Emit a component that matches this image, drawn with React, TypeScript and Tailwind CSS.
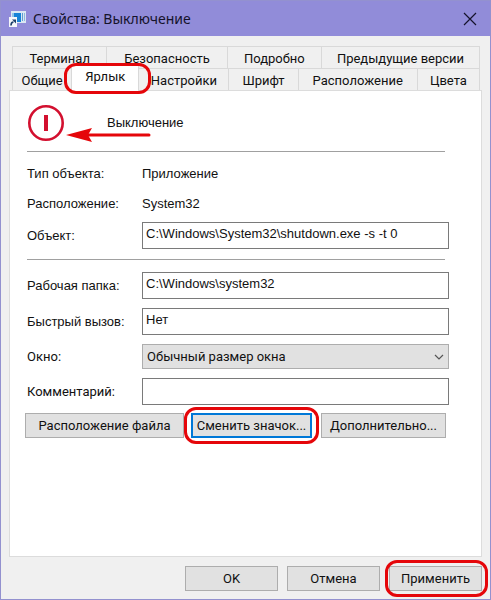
import React from 'react';
import { clsx } from 'clsx';

const topTabs = [
  { name: 'Терминал', width: 'grow-[94]' },
  { name: 'Безопасность', width: 'grow-[120]' },
  { name: 'Подробно', width: 'grow-[94]' },
  { name: 'Предыдущие версии', width: 'grow-[158]' },
];

const bottomTabs = [
  { name: 'Общие', width: 'grow-[59]' },
  { name: 'Ярлык', width: 'grow-[67]', active: true },
  { name: 'Настройки', width: 'grow-[90]' },
  { name: 'Шрифт', width: 'grow-[69]' },
  { name: 'Расположение', width: 'grow-[119]' },
  { name: 'Цвета', width: 'grow-[62]' },
];

const labelClass = 'w-[115px] shrink-0';
const inputClass =
  'h-[27px] min-w-0 flex-1 border border-[#7a7a7a] bg-white px-[3px] pb-1 text-[13px] text-[#111] outline-none';
const buttonClass = 'h-[25px] bg-[#e1e1e1] text-center whitespace-nowrap';
const grayBorder = 'border border-[#adadad]';

// Red frame drawn around the control that the reader has to click
function Highlight({ className }: { className: string }) {
  return (
    <span
      className={clsx(
        'pointer-events-none absolute z-20 rounded-xl border-3 border-[#e5060a]',
        className
      )}
    />
  );
}

function AppIcon() {
  return (
    <svg width="18" height="17" viewBox="0 0 18 17" aria-hidden="true">
      <rect x="2" y="1" width="15" height="12" fill="#dbe8f3" />
      <rect x="5" y="3" width="7" height="9" fill="#1683d8" />
      <rect x="3" y="3" width="2" height="9" fill="#8fc3ea" />
      <rect x="13" y="3" width="1" height="8" fill="#5d9fd2" />
      <rect x="15" y="3" width="1" height="8" fill="#8db9dc" />
      <rect x="0" y="7" width="8" height="10" fill="#f4f6fa" />
      <path d="M2 15.500c0-2.500 1-3.500 2.500-3.500" stroke="#1b3f6a" strokeWidth="1.600" fill="none" />
      <path d="M3 9.500h4v4z" fill="#1b3f6a" />
    </svg>
  );
}

function PowerIcon() {
  return (
    <svg width="38" height="38" viewBox="0 0 38 38" aria-hidden="true">
      <circle cx="19" cy="19" r="16.700" fill="none" stroke="#d3102f" strokeWidth="2.600" />
      <rect x="17" y="11" width="4" height="16" fill="#d3102f" />
    </svg>
  );
}

function Arrow() {
  return (
    <svg width="86" height="24" viewBox="0 0 86 24" aria-hidden="true">
      <path d="M22 12h62" stroke="#e5060a" strokeWidth="3" strokeLinecap="round" />
      <path d="M1 12L27 5l-4 7 4 7z" fill="#e5060a" />
    </svg>
  );
}

export default function App() {
  return (
    <div className="flex min-h-screen flex-col border border-[#9391cf] bg-[#f0f0f0] font-['Liberation_Sans',sans-serif] text-[13px] leading-5 text-[#111]">
      {/* Title bar */}
      <header className="flex h-[35px] shrink-0 items-center bg-[#918cd9] pr-3 pl-2">
        <AppIcon />
        <h1 className="ml-1.5 flex-1 font-['Noto_Sans',sans-serif] text-sm text-[#15132b]">
          Свойства: Выключение
        </h1>
        <button type="button" aria-label="Закрыть" className="flex size-4 items-center justify-center">
          <svg width="14" height="14" viewBox="0 0 14 14">
            <path d="M1 1l12 12M13 1L1 13" stroke="#15132b" strokeWidth="1.200" />
          </svg>
        </button>
      </header>

      <main className="flex flex-1 flex-col px-2 pt-2.5">
        {/* Tabs */}
        <div role="tablist" className="mr-0.5 ml-[3px] font-['Roboto',sans-serif]">
          <div className="flex h-[22px] border-t border-l border-[#d9d9d9]">
            {topTabs.map((tab) => (
              <button
                key={tab.name}
                type="button"
                role="tab"
                aria-selected="false"
                className={clsx('basis-0 border-r border-[#d9d9d9] pt-0.5 whitespace-nowrap', tab.width)}
              >
                {tab.name}
              </button>
            ))}
          </div>
          <div className="flex h-[22px] border-l border-[#d9d9d9]">
            {bottomTabs.map((tab) => (
              <div key={tab.name} className={clsx('relative flex basis-0', tab.width)}>
                <button
                  type="button"
                  role="tab"
                  aria-selected={!!tab.active}
                  className={clsx(
                    'flex-1 border-r border-[#d9d9d9] whitespace-nowrap',
                    tab.active ? 'z-10 -mt-1 -mb-px bg-white pb-0.5' : 'border-t pt-0.5'
                  )}
                >
                  {tab.name}
                </button>
                {tab.active && <Highlight className="-top-[5px] -right-3 -bottom-1 -left-2" />}
              </div>
            ))}
          </div>
        </div>

        {/* Shortcut page */}
        <section className="flex-1 border border-[#dcdcdc] bg-white pr-8 pl-[17px]">
          <div className="flex h-[60px] items-center pt-1">
            <PowerIcon />
            <div className="relative flex-1 pl-[42px]">
              Выключение
              <span className="absolute top-2.5 left-0">
                <Arrow />
              </span>
            </div>
          </div>
          <hr className="mr-1 border-[#a0a0a0]" />

          <form>
            <dl className="mt-3 flex flex-col gap-2.5">
              <div className="flex">
                <dt className={labelClass}>Тип объекта:</dt>
                <dd>Приложение</dd>
              </div>
              <div className="flex">
                <dt className={labelClass}>Расположение:</dt>
                <dd>System32</dd>
              </div>
            </dl>
            <div className="mt-2 flex items-center">
              <label htmlFor="target" className={labelClass}>Объект:</label>
              <input id="target" className={inputClass} defaultValue="C:\Windows\System32\shutdown.exe -s -t 0" />
            </div>
            <hr className="mt-2.5 mr-1 mb-3 border-[#a0a0a0]" />

            <div className="flex flex-col gap-[9px]">
              <div className="flex items-center">
                <label htmlFor="folder" className={labelClass}>Рабочая папка:</label>
                <input id="folder" className={inputClass} defaultValue="C:\Windows\system32" />
              </div>
              <div className="flex items-center">
                <label htmlFor="hotkey" className={labelClass}>Быстрый вызов:</label>
                <input id="hotkey" className={inputClass} defaultValue="Нет" />
              </div>
              <div className="flex items-center font-['Roboto',sans-serif]">
                <label htmlFor="window" className={labelClass}>Окно:</label>
                <div className="relative flex flex-1">
                  <select
                    id="window"
                    className="h-[25px] w-full appearance-none border border-[#adadad] bg-[#e1e1e1] px-1 text-[13px]"
                  >
                    <option>Обычный размер окна</option>
                  </select>
                  <svg className="pointer-events-none absolute top-2 right-1" width="12" height="10" viewBox="0 0 12 10">
                    <path d="M2 3l4 4 4-4" fill="none" stroke="#555" strokeWidth="1.200" />
                  </svg>
                </div>
              </div>
              <div className="flex items-center font-['Roboto',sans-serif]">
                <label htmlFor="comment" className={labelClass}>Комментарий:</label>
                <input id="comment" className={inputClass} />
              </div>
            </div>
          </form>

          <div className="mt-2 -ml-0.5 flex font-['Roboto',sans-serif]">
            <button type="button" className={clsx(buttonClass, grayBorder, 'w-[159px]')}>
              Расположение файла
            </button>
            <div className="relative ml-[7px] flex">
              <button type="button" className={clsx(buttonClass, 'w-[121px] border-2 border-[#0078d7]')}>
                Сменить значок...
              </button>
              <Highlight className="-inset-x-[7px] -inset-y-1.5" />
            </div>
            <button type="button" className={clsx(buttonClass, grayBorder, 'ml-[9px] w-[125px]')}>
              Дополнительно...
            </button>
          </div>
        </section>
      </main>

      {/* Dialog buttons */}
      <footer className="flex justify-end gap-[9px] pt-[9px] pr-2 pb-2 font-['Roboto',sans-serif]">
        <button type="button" className={clsx(buttonClass, grayBorder, 'w-[93px]')}>OK</button>
        <button type="button" className={clsx(buttonClass, grayBorder, 'w-[93px]')}>Отмена</button>
        <div className="relative flex">
          <button type="button" className={clsx(buttonClass, grayBorder, 'w-[93px]')}>Применить</button>
          <Highlight className="-inset-y-1.5 -right-1.5 -left-1" />
        </div>
      </footer>
    </div>
  );
}
